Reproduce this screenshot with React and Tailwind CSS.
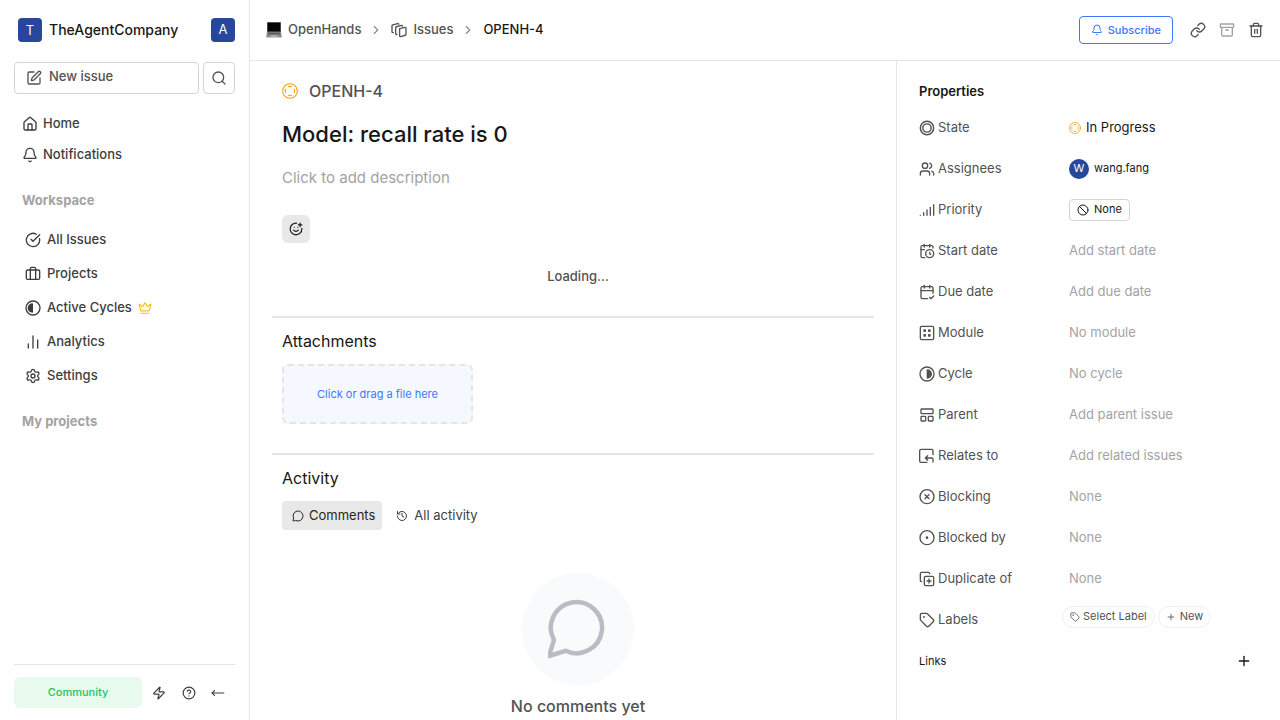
import React from "react";
import {
  SquarePen, Search, House, Bell, CircleCheckBig, Briefcase, Crown, ChartNoAxesColumn, Settings,
  Zap, CircleQuestionMark, MoveLeft, ChevronRight, Link, Archive, Trash2, Users, Signal,
  CalendarClock, CalendarCheck2, LayoutPanelTop, CopyPlus, Tag, Ban, SmilePlus, MessageCircle,
  History, Plus,
} from "lucide-react";

function Svg({ size = 16, className = "", stroke = 2, children }) {
  return (
    <svg
      width={size} height={size} viewBox="0 0 24 24" fill="none" stroke="currentColor"
      strokeWidth={stroke} strokeLinecap="round" strokeLinejoin="round"
      className={`shrink-0 ${className}`} aria-hidden="true"
    >
      {children}
    </svg>
  );
}

const LeftContrast = (p) => (
  <Svg {...p}>
    <circle cx="12" cy="12" r="10.5" />
    <path d="M11 6a6 6 0 0 0 0 12z" fill="currentColor" />
  </Svg>
);
const RightContrast = (p) => (
  <Svg {...p}>
    <circle cx="12" cy="12" r="10.5" />
    <path d="M12.5 6a6 6 0 0 1 0 12z" fill="currentColor" />
  </Svg>
);
const StateIcon = (p) => (
  <Svg {...p} stroke={2.2}>
    <circle cx="12" cy="12" r="10" />
    <circle cx="12" cy="12" r="6.2" />
  </Svg>
);
const ModuleIcon = (p) => (
  <Svg {...p}>
    <rect x="2" y="2" width="20" height="20" rx="2" />
    <g fill="currentColor" stroke="none">
      <rect x="6.5" y="6.5" width="4" height="4" rx="1" />
      <rect x="13.5" y="6.5" width="4" height="4" rx="1" />
      <rect x="6.5" y="13.5" width="4" height="4" rx="1" />
      <rect x="13.5" y="13.5" width="4" height="4" rx="1" />
    </g>
  </Svg>
);
const RelatedIcon = (p) => (
  <Svg {...p}>
    <path d="M12 21.5H3a2 2 0 0 1-2-2V4a2 2 0 0 1 2-2h16a2 2 0 0 1 2 2v6" />
    <path d="M21 21v-4a2 2 0 0 0-2-2h-9M13 11.5 9.500 15l3.500 3.500" />
  </Svg>
);
const BlockingIcon = (p) => (
  <Svg {...p}>
    <circle cx="12" cy="11.5" r="10.5" />
    <path d="m9 8.500 6 6M15 8.500l-6 6" />
  </Svg>
);
const BlockedIcon = (p) => (
  <Svg {...p}>
    <circle cx="12" cy="11.5" r="10.5" />
    <circle cx="12" cy="11.5" r="1" fill="currentColor" />
  </Svg>
);
const LayersIcon = (p) => (
  <Svg {...p}>
    <path d="m13 10 8-2a1.200 1.200 0 0 1 1.500 1.200v9.300a1.500 1.500 0 0 1-1.100 1.400l-7 2a1.200 1.200 0 0 1-1.500-1.200v-9.300a1.500 1.500 0 0 1 .1-1.400z" />
    <path d="M9 18.500a1.300 1.300 0 0 1-2-1.200V8.500a1.500 1.500 0 0 1 1.100-1.400l7.500-2a1.200 1.200 0 0 1 1.500 1.200" />
    <path d="M3.500 15.800a1.300 1.300 0 0 1-2-1.200V5.700a1.500 1.500 0 0 1 1.100-1.400l7.500-2a1.200 1.200 0 0 1 1.500 1.200" />
  </Svg>
);
const InProgress = ({ size }) => (
  <Svg size={size} stroke={1.6} className="text-[#f59e0b]">
    <circle cx="12" cy="12" r="11" />
    <path d="M9.500 5.500a7 7 0 0 1 5 0M18.500 9.500a7 7 0 0 1 0 5M14.500 18.500a7 7 0 0 1-5 0M5.500 14.500a7 7 0 0 1 0-5" />
  </Svg>
);
const Laptop = () => (
  <svg width="16" height="16" viewBox="0 0 16 16" className="shrink-0" aria-hidden="true">
    <path d="M1 .2h14v10H1z" fill="#555" />
    <path d="M1.800.7h12.400v8.600H1.800z" fill="#050505" />
    <path d="M1 10h14l.8 5H.200z" fill="#8b8b8d" />
    <path d="M1.900 10.500h12.200l.400 2H1.500z" fill="#5f5f63" />
    <path d="M5 13.300h6l.400 1.500H4.600z" fill="#b9b9bb" />
    <path d="M.200 15h15.600v.900H.200z" fill="#c9c9cb" />
  </svg>
);

const workspace = [
  [CircleCheckBig, "All Issues"],
  [Briefcase, "Projects"],
  [LeftContrast, "Active Cycles", true],
  [ChartNoAxesColumn, "Analytics"],
  [Settings, "Settings"],
];

function Sidebar() {
  return (
    <aside className="flex w-[250px] shrink-0 flex-col border-r border-[#e5e5e5] px-[14px] font-medium text-[#3d3d3d]">
      <div className="flex items-center justify-between pt-[18px] pl-1">
        <button className="flex items-center gap-[7px] text-sm text-[#171717]">
          <span className="flex size-6 items-center justify-center rounded bg-[#26479a] text-[13px] font-normal text-white">T</span>
          TheAgentCompany
        </button>
        <button className="flex size-6 items-center justify-center rounded bg-[#26479a] text-[13px] font-normal text-white">A</button>
      </div>
      <div className="mt-5 flex gap-1">
        <button className="flex h-8 flex-1 items-center gap-[7px] rounded border border-[#d4d4d4] px-[11px] text-[13px] text-[#525252]">
          <SquarePen size={16} />
          <span className="pb-0.5">New issue</span>
        </button>
        <button aria-label="Search" className="flex size-8 items-center justify-center rounded border border-[#d4d4d4] text-[#525252]">
          <Search size={16} />
        </button>
      </div>
      <nav className="mt-[14px] text-[13px]">
        <a href="#home" className="flex h-[31px] items-center gap-[5px] px-2"><House size={16} />Home</a>
        <a href="#notifications" className="flex h-[31px] items-center gap-[5px] px-2"><Bell size={16} />Notifications</a>
      </nav>
      <h2 className="mt-5 px-2 text-[13px] leading-5 font-bold text-[#a3a3a3]">Workspace</h2>
      <nav className="mt-[13px] text-[13px]">
        {workspace.map(([Icon, label, pro]) => (
          <a key={label} href={"#" + label} className="flex h-[34px] items-center gap-1.5 px-[11px]">
            <Icon size={16} />
            {label}
            {pro && <Crown size={14} className="text-[#fbbf24]" />}
          </a>
        ))}
      </nav>
      <h2 className="mt-[18px] px-2 text-[13px] leading-5 font-bold text-[#a3a3a3]">My projects</h2>
      <div className="mt-auto flex items-center border-t border-[#e5e5e5] pt-3 pb-3">
        <button className="h-[31px] w-32 rounded-md bg-[#e8f9ee] text-[11px] text-[#22c55e]">Community</button>
        <div className="flex flex-1 items-center justify-between px-2.5">
          <button aria-label="Shortcuts"><Zap size={14} /></button>
          <button aria-label="Help"><CircleQuestionMark size={14} /></button>
          <button aria-label="Collapse"><MoveLeft size={14} /></button>
        </div>
      </div>
    </aside>
  );
}

function Header() {
  return (
    <header className="flex h-[61px] shrink-0 items-center justify-between border-b border-[#e5e5e5] px-4">
      <nav className="flex items-center text-[13px] font-medium text-[#525252]">
        <a href="#project" className="flex items-center gap-1.5"><Laptop />OpenHands</a>
        <ChevronRight size={14} className="mx-2 text-[#8a8a8a]" />
        <a href="#issues" className="flex items-center gap-1.5"><LayersIcon size={16} />Issues</a>
        <ChevronRight size={14} className="mx-2 text-[#8a8a8a]" />
        <span className="text-[#171717]">OPENH-4</span>
      </nav>
      <div className="flex items-center text-[#525252]">
        <button className="mr-[17px] flex h-7 items-center gap-[5px] rounded border border-[#3f76ff] px-[11px] text-[11px] font-medium text-[#3f76ff]">
          <Bell size={12} />Subscribe
        </button>
        <div className="flex gap-[13px]">
          <button aria-label="Copy link"><Link size={16} /></button>
          <button aria-label="Archive" className="text-[#a3a3a3]"><Archive size={16} /></button>
          <button aria-label="Delete"><Trash2 size={16} /></button>
        </div>
      </div>
    </header>
  );
}

function Issue() {
  return (
    <main className="flex min-w-0 flex-1 flex-col overflow-hidden px-[22px] pt-5">
      <section className="pl-2.5">
        <div className="flex items-center gap-[11px] text-base leading-5 font-medium text-[#525252]">
          <InProgress size={16} />OPENH-4
        </div>
        <h1 className="mt-[17px] text-[22px] leading-8 font-medium text-[#171717]">Model: recall rate is 0</h1>
        <p className="mt-4 text-[15px] leading-6 text-[#a3a3a3]">Click to add description</p>
        <button aria-label="Add reaction" className="mt-[25px] flex size-7 items-center justify-center rounded-md bg-[#e8e8e8] text-[#171717]">
          <SmilePlus size={14} />
        </button>
        <p className="mt-[23px] text-center text-[13px] leading-5 font-medium text-[#525252]">Loading...</p>
      </section>
      <section className="mt-[30px] border-t-2 border-[#e5e5e5] pt-[11px] pl-2.5">
        <h2 className="text-base leading-6 text-[#171717]">Attachments</h2>
        <button className="mt-[11px] flex h-[60px] w-[191px] items-center justify-center rounded-md border-2 border-dashed border-[#e5e5e5] bg-[#f5f8ff] text-[11px] text-[#3f76ff]">
          Click or drag a file here
        </button>
      </section>
      <section className="mt-[29px] border-t-2 border-[#e5e5e5] pt-[11px] pl-2.5">
        <h2 className="text-base leading-6 text-[#171717]">Activity</h2>
        <div className="mt-[11px] flex gap-1.5 text-[13px] text-[#404040]">
          <button className="flex h-[29px] items-center gap-[5px] rounded bg-[#e8e8e8] pr-[7px] pl-[10px] text-[#262626]">
            <MessageCircle size={12} />Comments
          </button>
          <button className="flex h-[29px] items-center gap-1.5 px-2"><History size={12} />All activity</button>
        </div>
        <div className="mt-[43px] flex flex-col items-center">
          <div className="flex size-28 items-center justify-center rounded-full bg-[#f9fafc] text-[#b9bbc5]">
            <svg width="60" height="60" viewBox="0 0 60 60" fill="none" stroke="currentColor" strokeWidth="4.5" strokeLinejoin="round" aria-hidden="true">
              <path d="M6 41A25.600 25.600 0 1 1 17.500 51.800L.8 57z" />
            </svg>
          </div>
          <p className="mt-[9px] text-base leading-6 font-medium text-[#525252]">No comments yet</p>
        </div>
      </section>
    </main>
  );
}

function Row({ icon: Icon, label, children, muted }) {
  return (
    <div className="flex h-[41px] items-center">
      <dt className="flex w-[150px] shrink-0 items-center gap-[3px]"><Icon size={16} />{label}</dt>
      <dd className="flex min-w-0 flex-1 items-center text-[#171717]">
        {muted ? <button className="text-[#a3a3a3]">{muted}</button> : children}
      </dd>
    </div>
  );
}

function Properties() {
  return (
    <aside className="w-96 shrink-0 overflow-hidden border-l border-[#e5e5e5] px-[22px] pt-5 text-[13px] text-[#525252]">
      <h2 className="leading-5 font-semibold text-[#171717]">Properties</h2>
      <dl className="mt-1.5">
        <Row icon={StateIcon} label="State">
          <button className="flex items-center gap-[5px]"><InProgress size={12} />In Progress</button>
        </Row>
        <Row icon={Users} label="Assignees">
          <button className="flex items-center gap-[5px] text-[11px]">
            <span className="flex size-5 items-center justify-center rounded-full bg-[#26479a] text-white">W</span>wang.fang
          </button>
        </Row>
        <Row icon={Signal} label="Priority">
          <button className="flex h-[22px] items-center gap-[5px] rounded border border-[#d4d4d4] px-[7px] text-[11px]">
            <Ban size={12} />None
          </button>
        </Row>
        <Row icon={CalendarClock} label="Start date" muted="Add start date" />
        <Row icon={CalendarCheck2} label="Due date" muted="Add due date" />
        <Row icon={ModuleIcon} label="Module" muted="No module" />
        <Row icon={RightContrast} label="Cycle" muted="No cycle" />
        <Row icon={LayoutPanelTop} label="Parent" muted="Add parent issue" />
        <Row icon={RelatedIcon} label="Relates to" muted="Add related issues" />
        <Row icon={BlockingIcon} label="Blocking" muted="None" />
        <Row icon={BlockedIcon} label="Blocked by" muted="None" />
        <Row icon={CopyPlus} label="Duplicate of" muted="None" />
        <Row icon={Tag} label="Labels">
          <div className="-ml-[7px] flex gap-[3px] pb-1.5 text-[11px] text-[#525252]">
            <button className="flex h-[22px] items-center gap-[3px] rounded-full border border-[#f0f0f0] px-[7px]"><Tag size={10} />Select Label</button>
            <button className="flex h-[22px] items-center gap-1 rounded-full border border-[#f0f0f0] px-[7px]"><Plus size={10} />New</button>
          </div>
        </Row>
      </dl>
      <div className="mt-[11px] flex items-center justify-between pr-1.5 text-[11px] leading-5 text-[#171717]">
        <h3>Links</h3>
        <button aria-label="Add link"><Plus size={16} /></button>
      </div>
    </aside>
  );
}

export default function App() {
  return (
    <div className="flex h-screen overflow-hidden bg-white font-['Inter',sans-serif]">
      <Sidebar />
      <div className="flex min-w-0 flex-1 flex-col">
        <Header />
        <div className="flex min-h-0 flex-1">
          <Issue />
          <Properties />
        </div>
      </div>
    </div>
  );
}
